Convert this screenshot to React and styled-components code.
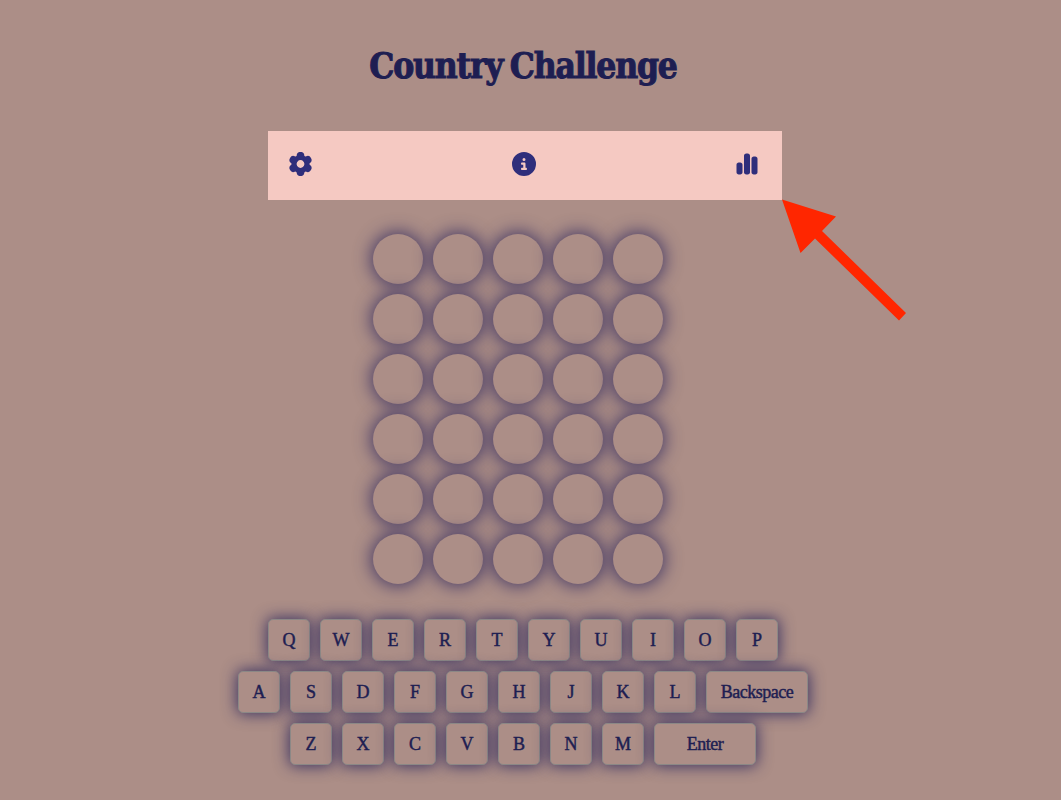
import React from "react";
import styled, { createGlobalStyle } from "styled-components";
import { FaCircleInfo, FaChartSimple } from "react-icons/fa6";

const GlobalStyle = createGlobalStyle`
  * { box-sizing: border-box; }
  body { margin: 0; background: #ac8e87; overflow: hidden; }
`;

const Page = styled.main`
  position: relative;
  width: 1061px;
  height: 800px;
  padding-right: 15px;
  display: flex;
  flex-direction: column;
  align-items: center;
  background: #ac8e87;
  color: #1e1e52;
  font-family: "Liberation Serif", serif;
`;

const Title = styled.h1`
  margin: 45px 0 0;
  height: 86px;
  font: 700 35px/42px "DejaVu Serif Condensed", "DejaVu Serif", serif;
  font-stretch: condensed;
  letter-spacing: -1.15px;
  word-spacing: -2.5px;
  -webkit-text-stroke: 1px #1e1e52;
  white-space: nowrap;
`;

const Toolbar = styled.nav`
  width: 514px;
  height: 69px;
  margin-left: 4px;
  padding: 0 23px 3px 20px;
  display: flex;
  align-items: center;
  justify-content: space-between;
  background: #f5c9c2;
`;

const IconButton = styled.button`
  display: flex;
  padding: 0;
  border: 0;
  background: none;
  color: #2f2e7b;
  font-size: 24px;
`;

const Board = styled.section`
  display: grid;
  grid-template-columns: repeat(5, 50px);
  grid-auto-rows: 50px;
  gap: 10px;
  margin: 34px 10px 0 0;
`;

const Tile = styled.div`
  border-radius: 50%;
  background: #ac8e87;
  box-shadow: 0 0 17px 2px rgba(42, 36, 92, 0.8);
`;

const Keyboard = styled.section`
  display: flex;
  flex-direction: column;
  align-items: center;
  gap: 10px;
  margin-top: 35px;
`;

const KeyRow = styled.div`
  display: flex;
  gap: 10px;
`;

const Key = styled.button`
  width: ${({ $wide }) => ($wide ? 102 : 42)}px;
  height: 42px;
  padding: 1px 0 0;
  border: 1px solid #8b8886;
  border-radius: 5px;
  background: #ac8e87;
  box-shadow: 0 0 15px 1px rgba(38, 34, 90, 0.85);
  color: #1e1e52;
  font: 18px/39px "Liberation Serif", serif;
  letter-spacing: ${({ $wide }) => ($wide ? "-0.5px" : "0")};
  -webkit-text-stroke: 0.45px #1e1e52;
`;

const Arrow = styled.svg`
  position: absolute;
  left: 780px;
  top: 197px;
  width: 130px;
  height: 128px;
`;

const rows = [
  ["Q", "W", "E", "R", "T", "Y", "U", "I", "O", "P"],
  ["A", "S", "D", "F", "G", "H", "J", "K", "L", "Backspace"],
  ["Z", "X", "C", "V", "B", "N", "M", "Enter"],
];

function GearIcon() {
  return (
    <svg width="25" height="24" viewBox="-12.5 -12 25 24" fill="none" stroke="currentColor">
      <circle r="6.5" strokeWidth="5.2" />
      {[0, 60, 120, 180, 240, 300].map((angle) => (
        <path
          key={angle}
          d="M0-7.8V-8.3"
          strokeWidth="7.6"
          strokeLinecap="round"
          transform={`rotate(${angle})`}
        />
      ))}
    </svg>
  );
}

export default function App() {
  return (
    <>
      <GlobalStyle />
      <Page>
        <Title>Country Challenge</Title>
        <Toolbar>
          <IconButton aria-label="Settings"><GearIcon /></IconButton>
          <IconButton aria-label="Information"><FaCircleInfo /></IconButton>
          <IconButton aria-label="Statistics"><FaChartSimple /></IconButton>
        </Toolbar>
        <Board>
          {Array.from({ length: 30 }, (_, i) => <Tile key={i} />)}
        </Board>
        <Keyboard>
          {rows.map((row) => (
            <KeyRow key={row[0]}>
              {row.map((label) => (
                <Key key={label} $wide={label.length > 1}>{label}</Key>
              ))}
            </KeyRow>
          ))}
        </Keyboard>
        <Arrow viewBox="780 197 130 128" aria-hidden="true">
          <path
            d="M782 199.5L836 216.5L822 231L906 313L899 320.5L815 238.5L800.5 253Z"
            fill="#ff2600"
          />
        </Arrow>
      </Page>
    </>
  );
}
